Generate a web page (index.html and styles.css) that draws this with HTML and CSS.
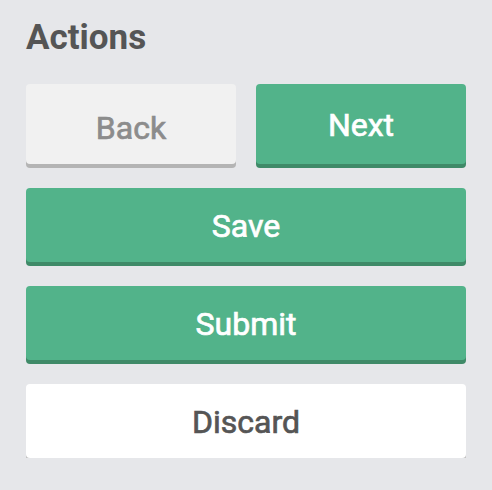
FILE: index.html
```html
<!DOCTYPE html>
<html lang="en">
<head>
    <meta charset="UTF-8">
    <meta name="viewport" content="width=device-width, initial-scale=1.0">
    <title>Actions</title>
    <link rel="stylesheet" href="styles.css">
</head>
<body>
    <div class="panel">
        <h2>Actions</h2>

        <div class="actions">
            <div class="row">
                <button class="btn btn-muted" disabled>Back</button>
                <button class="btn btn-primary">Next</button>
            </div>
            <button class="btn btn-primary">Save</button>
            <button class="btn btn-primary">Submit</button>
            <button class="btn btn-light">Discard</button>
        </div>
    </div>
</body>
</html>
```

FILE: styles.css
```css
body {
    font-family: Roboto, "Liberation Sans", Arial, sans-serif;
    margin: 0;
    background-color: #e6e7ea;
}
.panel {
    padding: 17px 26px 0 26px;
}
h2 {
    margin: 0 0 25px 0;
    font-size: 35px;
    line-height: 42px;
    font-weight: 700;
    color: #555555;
}
.actions {
    display: flex;
    flex-direction: column;
    gap: 24px;
}
.row {
    display: flex;
    gap: 20px;
}
.row .btn {
    flex: 1;
    height: 80px;
    line-height: 78px;
}
.btn {
    box-sizing: border-box;
    height: 74px;
    line-height: 72px;
    padding: 2px 0 0 0;
    border: none;
    border-radius: 4px;
    font-family: inherit;
    font-size: 32px;
    font-weight: 400;
    /* no medium face installed, thicken the regular one a little */
    -webkit-text-stroke: 0.7px currentColor;
    cursor: pointer;
}
.btn-primary {
    background-color: #52b38a;
    color: #ffffff;
    box-shadow: 0 4px 0 #3f8a68;
}
.btn-muted {
    background-color: #f1f1f1;
    color: #8c8c8c;
    box-shadow: 0 4px 0 #b4b4b4;
    padding-top: 5px;
    cursor: default;
}
.btn-light {
    background-color: #ffffff;
    color: #555555;
    box-shadow: 0 4px 0 #c2c2c2;
}
```
